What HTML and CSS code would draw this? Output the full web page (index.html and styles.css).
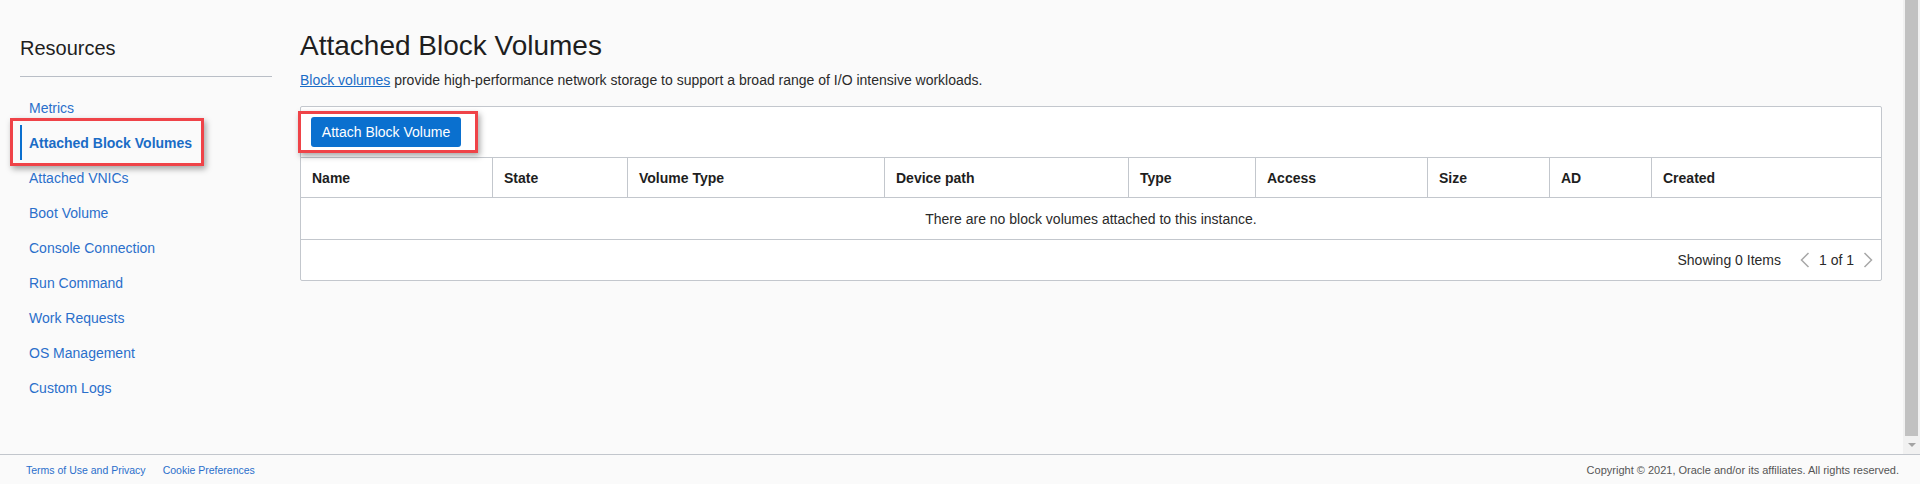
FILE: index.html
```html
<!DOCTYPE html>
<html lang="en">
<head>
<meta charset="utf-8">
<title>Attached Block Volumes</title>
<link rel="stylesheet" href="styles.css">
</head>
<body>
<div class="page">
  <div class="viewport">
    <div class="content">
      <aside class="sidebar">
        <h2 class="side-title">Resources</h2>
        <ul class="side-nav">
          <li class="side-item"><a href="#">Metrics</a></li>
          <li class="side-item active"><a href="#">Attached Block Volumes</a><span class="highlight hl-side"></span></li>
          <li class="side-item"><a href="#">Attached VNICs</a></li>
          <li class="side-item"><a href="#">Boot Volume</a></li>
          <li class="side-item"><a href="#">Console Connection</a></li>
          <li class="side-item"><a href="#">Run Command</a></li>
          <li class="side-item"><a href="#">Work Requests</a></li>
          <li class="side-item"><a href="#">OS Management</a></li>
          <li class="side-item"><a href="#">Custom Logs</a></li>
        </ul>
      </aside>
      <main class="main">
        <h1 class="title">Attached Block Volumes</h1>
        <p class="desc"><a href="#">Block volumes</a> provide high-performance network storage to support a broad range of I/O intensive workloads.</p>
        <div class="table">
          <div class="toolbar">
            <span class="btn-wrap">
              <button class="btn" type="button">Attach Block Volume</button>
              <span class="highlight hl-btn"></span>
            </span>
          </div>
          <div class="thead">
            <div class="th">Name</div>
            <div class="th">State</div>
            <div class="th">Volume Type</div>
            <div class="th">Device path</div>
            <div class="th">Type</div>
            <div class="th">Access</div>
            <div class="th">Size</div>
            <div class="th">AD</div>
            <div class="th">Created</div>
          </div>
          <div class="empty-row">There are no block volumes attached to this instance.</div>
          <div class="table-footer">
            <span class="count">Showing 0 Items</span>
            <span class="pager">
              <svg class="chev" width="10" height="16" viewBox="0 0 10 16"><polyline points="8.5,1 1.5,8 8.5,15" fill="none" stroke="#a8a8a8" stroke-width="1.5"/></svg>
              <span class="pages">1 of 1</span>
              <svg class="chev" width="10" height="16" viewBox="0 0 10 16"><polyline points="1.5,1 8.5,8 1.5,15" fill="none" stroke="#a8a8a8" stroke-width="1.5"/></svg>
            </span>
          </div>
        </div>
      </main>
    </div>
    <div class="scrollbar">
      <div class="thumb"></div>
      <div class="arrow-btn"><span class="arrow"></span></div>
    </div>
  </div>
  <footer class="footer">
    <div class="footer-links">
      <a href="#">Terms of Use and Privacy</a>
      <a href="#">Cookie Preferences</a>
    </div>
    <div class="copyright">Copyright © 2021, Oracle and/or its affiliates. All rights reserved.</div>
  </footer>
</div>
</body>
</html>
```

FILE: styles.css
```css
* { box-sizing: border-box; }

html, body {
  margin: 0;
  padding: 0;
  height: 484px;
  overflow: hidden;
  background: #fafafa;
  font-family: "Liberation Sans", Arial, sans-serif;
  color: #222;
}

a { text-decoration: none; }

.page {
  display: flex;
  flex-direction: column;
  height: 484px;
}

.viewport {
  display: flex;
  height: 454px;
}

.content {
  flex: 1;
  display: flex;
  gap: 28px;
  padding: 30px 21px 0 20px;
}

/* Sidebar */
.sidebar {
  width: 252px;
  flex: none;
}

.side-title {
  margin: 6px 0 0;
  font-size: 20px;
  line-height: 24px;
  font-weight: normal;
  color: #1e1e1e;
  padding-bottom: 16px;
  border-bottom: 1px solid #b9bec6;
}

.side-nav {
  list-style: none;
  margin: 13px 0 0;
  padding: 0;
}

.side-item {
  position: relative;
  height: 35px;
  display: flex;
  align-items: center;
  padding-left: 7px;
  border-left: 2px solid transparent;
  font-size: 14px;
}

.side-item a { color: #2a6fcb; }

.side-item.active {
  border-left-color: #0a6fce;
}

.side-item.active a {
  font-weight: bold;
  color: #1a6cc6;
}

.highlight {
  position: absolute;
  border: 3px solid #ef4348;
  box-shadow: 2px 3px 6px rgba(0, 0, 0, 0.35);
  pointer-events: none;
}

.hl-side {
  left: -12px;
  top: -7px;
  width: 194px;
  height: 48px;
}

/* Main */
.main {
  flex: 1;
  min-width: 0;
}

.title {
  margin: 0;
  font-size: 28px;
  line-height: 32px;
  font-weight: normal;
  color: #1e1e1e;
}

.desc {
  margin: 8px 0 0;
  font-size: 14px;
  line-height: 20px;
  color: #2a2a2a;
}

.desc a {
  color: #1a6cc6;
  text-decoration: underline;
}

.table {
  margin-top: 16px;
  background: #fff;
  border: 1px solid #c3c7cd;
  border-radius: 2px;
}

.toolbar {
  padding: 10px 10px;
  border-bottom: 1px solid #c3c7cd;
  display: flex;
}

.btn-wrap {
  position: relative;
  display: inline-flex;
}

.btn {
  height: 30px;
  width: 150px;
  padding: 0;
  border: none;
  border-radius: 3px;
  background: #0a70cf;
  color: #fff;
  font-family: "Liberation Sans", Arial, sans-serif;
  font-size: 14px;
  white-space: nowrap;
}

.hl-btn {
  left: -13px;
  top: -6px;
  width: 180px;
  height: 42px;
}

.thead {
  display: grid;
  grid-template-columns: 191px 135px 257px 244px 127px 172px 122px 102px 1fr;
  border-bottom: 1px solid #c3c7cd;
}

.th {
  height: 39px;
  display: flex;
  align-items: center;
  padding-left: 11px;
  border-left: 1px solid #c3c7cd;
  font-size: 14px;
  font-weight: bold;
  color: #1e1e1e;
}

.th:first-child { border-left: none; }

.empty-row {
  height: 42px;
  display: flex;
  align-items: center;
  justify-content: center;
  border-bottom: 1px solid #c3c7cd;
  font-size: 14px;
  color: #2a2a2a;
}

.table-footer {
  height: 40px;
  display: flex;
  align-items: center;
  justify-content: flex-end;
  padding-right: 8px;
  font-size: 14px;
  color: #2a2a2a;
}

.pager {
  display: flex;
  align-items: center;
  gap: 9px;
  margin-left: 19px;
}

.chev { display: block; }

/* Fake scrollbar */
.scrollbar {
  width: 17px;
  flex: none;
  background: #f1f1f1;
  display: flex;
  flex-direction: column;
}

.thumb {
  height: 436px;
  margin: 0 2px;
  background: #c1c1c1;
}

.arrow-btn {
  flex: 1;
  display: flex;
  align-items: center;
  justify-content: center;
}

.arrow {
  width: 0;
  height: 0;
  border-left: 4px solid transparent;
  border-right: 4px solid transparent;
  border-top: 4px solid #a3a3a3;
}

/* Footer */
.footer {
  flex: 1;
  display: flex;
  align-items: center;
  justify-content: space-between;
  padding: 0 21px 0 26px;
  border-top: 1px solid #c2c6cc;
  background: #fafafa;
  font-size: 11px;
}

.footer-links {
  display: flex;
  gap: 17px;
  font-size: 10.5px;
}

.footer-links a { color: #2a6fcb; }

.copyright { color: #555; }
```
